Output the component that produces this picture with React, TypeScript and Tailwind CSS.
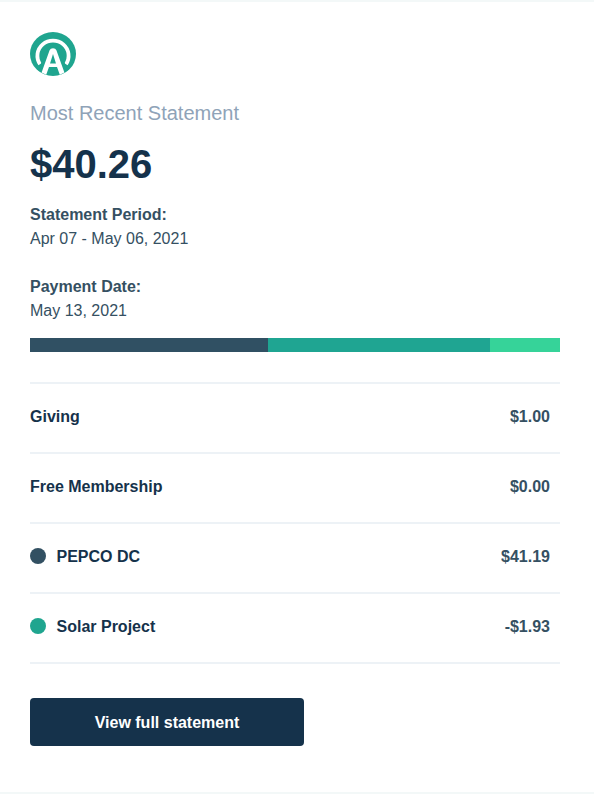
const rows = [
  { label: "Giving", amount: "$1.00", dot: "" },
  { label: "Free Membership", amount: "$0.00", dot: "" },
  { label: "PEPCO DC", amount: "$41.19", dot: "bg-[#325062]" },
  { label: "Solar Project", amount: "-$1.93", dot: "bg-[#1fa58f]" },
];

function Logo() {
  return (
    <svg className="block h-11 w-[46px]" viewBox="0 0 46 44" fill="none">
      <ellipse cx="23" cy="22" rx="23" ry="22" fill="#1fa58f" />
      <path d="M10 32.2A15.6 15.2 0 1 1 36 32.2" stroke="#fff" strokeWidth="3.8" />
      <path d="M10.8 39.5L20.5 17.5H25.5L35.2 39.5" stroke="#1fa58f" strokeWidth="6" strokeLinejoin="round" />
      <path d="M11.6 40.6L19.6 18.2Q20.4 16.2 23 16.2T26.4 18.2L34.4 40.6L29.8 42.8L27 35H19L16.2 42.8Z" fill="#fff" />
      <path d="M23 22L26 31.4H20Z" fill="#1fa58f" />
    </svg>
  );
}

export default function App() {
  return (
    <main className="h-[794px] w-[594px] overflow-hidden border-y-2 border-[#f3f8f8] bg-white pl-[30px] pr-[34px] pt-[30px] font-['Liberation_Sans',Arial,sans-serif] text-base leading-6 text-[#355062]">
      <Logo />
      <h2 className="mt-[22px] text-xl leading-[30px] text-[#8fa3b8]">Most Recent Statement</h2>
      <p className="mt-3 text-[40px] font-bold leading-[48px] text-[#15324b]">$40.26</p>
      <div className="mt-[15px]">
        <p className="font-bold">Statement Period:</p>
        <p>Apr 07 - May 06, 2021</p>
      </div>
      <div className="mt-6">
        <p className="font-bold">Payment Date:</p>
        <p>May 13, 2021</p>
      </div>
      <div className="mt-[15px] flex h-[14px]">
        <div className="w-[238px] bg-[#305063]" />
        <div className="w-[222px] bg-[#1fa592]" />
        <div className="flex-1 bg-[#36d399]" />
      </div>
      <ul className="mt-[30px] border-b-2 border-[#edf2f6]">
        {rows.map((row) => (
          <li key={row.label} className="flex h-[70px] items-center border-t-2 border-[#edf2f6] pb-0.5 pr-[10px] font-bold">
            {row.dot && <span className={`mb-0.5 mr-[10.5px] size-4 rounded-full ${row.dot}`} />}
            <span className="text-[#15324b]">{row.label}</span>
            <span className="ml-auto">{row.amount}</span>
          </li>
        ))}
      </ul>
      <button className="mt-[34px] flex h-12 w-[274px] items-center justify-center rounded-[4px] bg-[#15324b] pt-0.5 font-bold text-white">
        View full statement
      </button>
    </main>
  );
}
